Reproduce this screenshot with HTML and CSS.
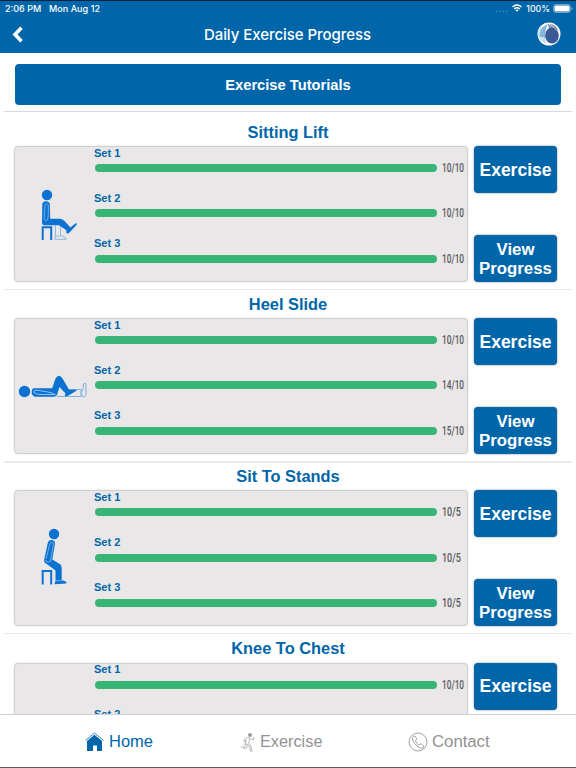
FILE: index.html
```html
<!DOCTYPE html>
<html lang="en">
<head>
  <meta charset="UTF-8">
  <meta name="viewport" content="width=device-width, initial-scale=1.0">
  <title>Daily Exercise Progress</title>
  <link rel="stylesheet" href="styles.css">
</head>
<body>
  <header>
    <div class="status">
      <span class="time">2:06 PM</span>
      <span class="date">Mon Aug 12</span>
      <span class="dots">....</span>
      <svg class="wifi" width="10" height="8" viewBox="0 0 10 8" fill="none" stroke="#fff" stroke-width="1.4">
        <path d="M0.5 3Q5 -1 9.500 3M2.200 4.900Q5 2.400 7.800 4.900"/>
        <path d="M3.400 6L5 7.800L6.600 6Q5 4.800 3.400 6Z" fill="#fff" stroke="none"/>
      </svg>
      <span class="percent">100%</span>
      <svg class="battery" width="20" height="9" viewBox="0 0 20 9">
        <rect x="0.500" y="0.500" width="17" height="8" rx="2" fill="none" stroke="#6fa5cd"/>
        <rect x="1.500" y="1.500" width="15" height="6" rx="1" fill="#fff"/>
        <path d="M18.500 3v3q1-0.500 1-1.500t-1-1.500" fill="#8fb9d8"/>
      </svg>
    </div>
    <nav>
      <svg class="back" width="12" height="17" viewBox="0 0 12 17" fill="none" stroke="#fff" stroke-width="3.600">
        <path d="M10.500 1.700L4 8.500L10.500 15.300"/>
      </svg>
      <h1>Daily Exercise Progress</h1>
      <svg class="logo" width="24" height="24" viewBox="0 0 24 24">
        <circle cx="12" cy="12" r="11.500" fill="#fff"/>
        <path d="M5 4Q0 8 1.500 14Q3.500 20 10 21.500Q5 13 8 5Z" fill="#c4dfed"/>
        <path d="M4 8Q7 3 11 2Q8 6 8.500 17Q6 14 2.500 15Q2.500 11 4 8Z" fill="#83b7dc"/>
        <path d="M11 2Q19 1.500 21.500 9Q17 5 12 7Z" fill="#8792b3"/>
        <ellipse cx="15" cy="13.500" rx="6.800" ry="8" fill="#3c5a96"/>
        <path d="M12 2Q17 5 21.700 10" fill="none" stroke="#dce5ef" stroke-width="0.700"/>
      </svg>
    </nav>
  </header>

  <main>
    <button class="tutorials">Exercise Tutorials</button>

    <section class="exercise first">
      <h2>Sitting Lift</h2>
      <div class="row">
        <div class="card">
          <svg class="figure" width="79" height="134" viewBox="1 1 79 134">
            <circle cx="33" cy="49" r="5.200" fill="#0b72d2"/>
            <path d="M28.300 58Q29 55.300 32 55.300T35.900 58L36.200 72.700H46Q48 72.700 50 74.500L56.500 81.500L61.500 77.300Q63.500 77 62.500 79L54.500 87.500Q53 88 52 86L52.700 84.500L45 79.300H30Q28 79 28 77Z" fill="#0b72d2"/>
            <path d="M31.500 75Q29.700 74 30.200 70L31 59Q33 56 34.300 59V69Q34 75 31.500 75" fill="none" stroke="#b9d2ea" stroke-width="0.600"/>
            <path d="M28.700 94V81.300H37.200V94" fill="none" stroke="#0b72d2" stroke-width="2"/>
            <path d="M41.500 79V89M46.500 80V89M41 89.500Q45 91 47 89.500Q51 91 52 92V93.300H41Z" fill="none" stroke="#82b2df" stroke-width="0.900"/>
          </svg>
          <div class="sets">
            <div class="set"><h3>Set 1</h3><div class="line"><div class="bar"></div><span class="score">10/10</span></div></div>
            <div class="set"><h3>Set 2</h3><div class="line"><div class="bar"></div><span class="score">10/10</span></div></div>
            <div class="set"><h3>Set 3</h3><div class="line"><div class="bar"></div><span class="score">10/10</span></div></div>
          </div>
        </div>
        <div class="buttons">
          <button>Exercise</button>
          <button>View<br>Progress</button>
        </div>
      </div>
    </section>

    <section class="exercise">
      <h2>Heel Slide</h2>
      <div class="row">
        <div class="card">
          <svg class="figure" width="79" height="134" viewBox="1 1 79 134">
            <circle cx="10.500" cy="73.500" r="5.700" fill="#0b72d2"/>
            <path d="M20 70.300H38.200L41.500 60.500Q45 55 48.500 60.500L55 71.500L62 71Q63.800 71.500 62 73L52 79Q50 79 51 77L51.500 75.500L45.500 69L43 77Q42.500 78.800 40 78.800H21Q17.500 77.500 17.700 74T20 70.300Z" fill="#0b72d2"/>
            <path d="M42 77Q39 75 34 74L22 72Q19.500 72 20 74.500Q22 76.500 27 76.500H40" fill="none" stroke="#b9d2ea" stroke-width="0.800"/>
            <path d="M43 78.500H67M59 71.500H67V78.500M68 78Q66.500 75 69 71L69.500 66Q71.500 64 72 67V77Q71 80 68 78Z" fill="none" stroke="#70a9df" stroke-width="0.900"/>
          </svg>
          <div class="sets">
            <div class="set"><h3>Set 1</h3><div class="line"><div class="bar"></div><span class="score">10/10</span></div></div>
            <div class="set"><h3>Set 2</h3><div class="line"><div class="bar"></div><span class="score">14/10</span></div></div>
            <div class="set"><h3>Set 3</h3><div class="line"><div class="bar"></div><span class="score">15/10</span></div></div>
          </div>
        </div>
        <div class="buttons">
          <button>Exercise</button>
          <button>View<br>Progress</button>
        </div>
      </div>
    </section>

    <section class="exercise thick">
      <h2>Sit To Stands</h2>
      <div class="row">
        <div class="card">
          <svg class="figure" width="79" height="134" viewBox="1 1 79 134">
            <circle cx="40" cy="44" r="5.200" fill="#0b72d2"/>
            <path d="M34 52Q35.500 49.500 39 50.200Q41.500 51.500 41 54L38.300 69.500L46.500 74.500Q47.700 76 47.700 78V90L52 91.700Q53.500 92.500 52 93.500L41 94.300Q40 93 41.500 91V80.500L32 73.500Q29.500 72 30.300 69Z" fill="#0b72d2"/>
            <path d="M31.500 70Q32 73 36.500 71.500L39.500 54Q39.500 51 36 53.500L32 69" fill="none" stroke="#b9d2ea" stroke-width="0.600"/>
            <path d="M28.700 94.500V81H37.200V94.500" fill="none" stroke="#0b72d2" stroke-width="2"/>
            <path d="M41 90.700H48" stroke="#9bc3e8" stroke-width="0.700"/>
          </svg>
          <div class="sets">
            <div class="set"><h3>Set 1</h3><div class="line"><div class="bar"></div><span class="score big">10/5</span></div></div>
            <div class="set"><h3>Set 2</h3><div class="line"><div class="bar"></div><span class="score big">10/5</span></div></div>
            <div class="set"><h3>Set 3</h3><div class="line"><div class="bar"></div><span class="score big">10/5</span></div></div>
          </div>
        </div>
        <div class="buttons">
          <button>Exercise</button>
          <button>View<br>Progress</button>
        </div>
      </div>
    </section>

    <section class="exercise">
      <h2>Knee To Chest</h2>
      <div class="row">
        <div class="card">
          <svg class="figure" width="79" height="134" viewBox="1 1 79 134">
            <circle cx="10.500" cy="73.500" r="5.700" fill="#0b72d2"/>
            <path d="M20 70H42L54 52Q56 51 58 54L50 78H20Q16 74 20 70Z" fill="#0b72d2"/>
          </svg>
          <div class="sets">
            <div class="set"><h3>Set 1</h3><div class="line"><div class="bar"></div><span class="score">10/10</span></div></div>
            <div class="set"><h3>Set 2</h3></div>
          </div>
        </div>
        <div class="buttons">
          <button>Exercise</button>
        </div>
      </div>
    </section>
  </main>

  <footer>
    <a class="tab active">
      <svg width="19" height="20" viewBox="0 0 19 20">
        <path d="M0.500 8.500L9.500 1L18.500 8.500" fill="none" stroke="#0066a9" stroke-width="0.800"/>
        <path d="M2 9L9.500 2.700L17 9V19H12V13.500H8V19H2Z" fill="#0066a9"/>
      </svg>
      <span class="home">Home</span>
    </a>
    <a class="tab">
      <svg width="15" height="20" viewBox="0 0 15 20" fill="none" stroke="#b0b0b0" stroke-width="0.900">
        <circle cx="10" cy="3" r="2" fill="#9a9a9a" stroke="none"/>
        <path d="M7.500 5.500L4.500 7L4 10M7.500 5.500Q10 5.500 10 7L8.500 11L11 14L11.500 19M10.500 6.500L13.500 8L14 5M6 7.500L5.500 12L4.500 15H0.800M6 8L5 12.500L7.500 12L9.500 15L10.500 19H12.500M3 16.500L6.500 16L7.500 13"/>
      </svg>
      <span class="run">Exercise</span>
    </a>
    <a class="tab">
      <svg width="20" height="20" viewBox="0 0 20 20" fill="none" stroke="#999" stroke-width="0.900">
        <circle cx="10" cy="10" r="9"/>
        <path d="M5.500 4.500L7 4Q8 5 8.700 7.500L7.300 8.800Q8.500 11.500 11 13L12.500 11.800Q14.500 12.500 15.800 14L15 16Q12.500 17 9 14Q5 10.500 4.300 7Q4.300 5.200 5.500 4.500Z"/>
      </svg>
      <span class="contact">Contact</span>
    </a>
  </footer>
</body>
</html>
```
FILE: styles.css
```css
* { margin:0; padding:0; box-sizing:border-box; }
body { height:768px; overflow:hidden; display:flex; flex-direction:column; font-family:"Liberation Sans", Arial, sans-serif; background:#fff; color:#0066a9; border-bottom:1px solid #59595b; }
button { font-family:inherit; font-weight:bold; color:#fff; background:#0066a9; border:none; border-radius:4px; }

/* Top bar */
header { height:53px; flex-shrink:0; background:#0066a9; color:#fff; border-top:1px solid #00233f; }
.status { display:flex; align-items:center; height:14px; padding:0 3px 0 5px; font:500 9px "Inter", sans-serif; }
.time { width:44px; }
.date { letter-spacing:0.05px; }
.dots { margin-left:auto; margin-right:4px; color:#6fa5cd; letter-spacing:0.6px; }
.percent { margin:0 3px 0 4px; font-size:8.8px; }
nav { display:flex; align-items:center; justify-content:space-between; height:38px; padding:0 15px 0 11px; }
nav h1 { font:500 15px "Inter", sans-serif; letter-spacing:-0.05px; padding-left:15px; }

/* Exercise list */
main { flex:1; min-height:0; overflow:hidden; padding:11px 4px 0; }
.tutorials { display:block; width:546px; height:41px; margin:0 0 6px 11px; font-size:14.7px; }
.exercise { height:172.2px; border-top:1px solid #e8e8ea; }
.exercise h2 { height:28.700px; line-height:29px; font-size:16.4px; text-align:center; }
.exercise.thick { border-top:2px solid #ebebed; }
.exercise.thick h2 { height:27.700px; line-height:27px; }
.exercise.first { height:177.500px; border-top-color:#d9d9db; }
.exercise.first h2 { height:34px; line-height:41px; }
.row { display:flex; gap:6px; padding-left:10px; }
.card { display:flex; width:454px; height:136px; background:#e9e7e8; border:1px solid #cfd0d0; border-radius:4px; box-shadow:0 0 2px rgba(0,0,0,0.15); }
.figure { flex-shrink:0; }
.sets { flex:1; margin-top:-0.500px; }
.set { height:45.3px; }
.set h3 { font-size:11px; line-height:12px; height:11.500px; }
.line { display:flex; align-items:center; gap:5px; height:20px; padding-left:1px; }
.bar { width:342px; height:8px; background:#38b477; border-radius:4px; }
.score { width:31px; font:500 12px/20px "Roboto", sans-serif; color:#59595b; transform:scaleX(0.69); transform-origin:left; }
.score.big { font-size:13px; }
.buttons { display:flex; flex-direction:column; justify-content:space-between; height:136px; }
.buttons button { width:83px; height:47px; padding-top:1px; font-size:17.5px; line-height:19px; box-shadow:0 0 2px rgba(0,0,0,0.5); }
.buttons button + button { font-size:16.8px; }

/* Tab bar */
footer { display:flex; height:53px; flex-shrink:0; padding:1px 0 0 85px; align-items:center; border-top:1px solid #d0d0d2; background:#fff; }
.tab { display:flex; align-items:center; color:#929292; font-size:16.5px; }
.tab.active { color:#0066a9; }
.tab span { margin-left:5px; }
.tab .home { width:131px; }
.tab .run { width:148px; font-size:16.3px; }
.tab .contact { font-size:16.900px; letter-spacing:-0.1px; margin-left:4px; }
```
